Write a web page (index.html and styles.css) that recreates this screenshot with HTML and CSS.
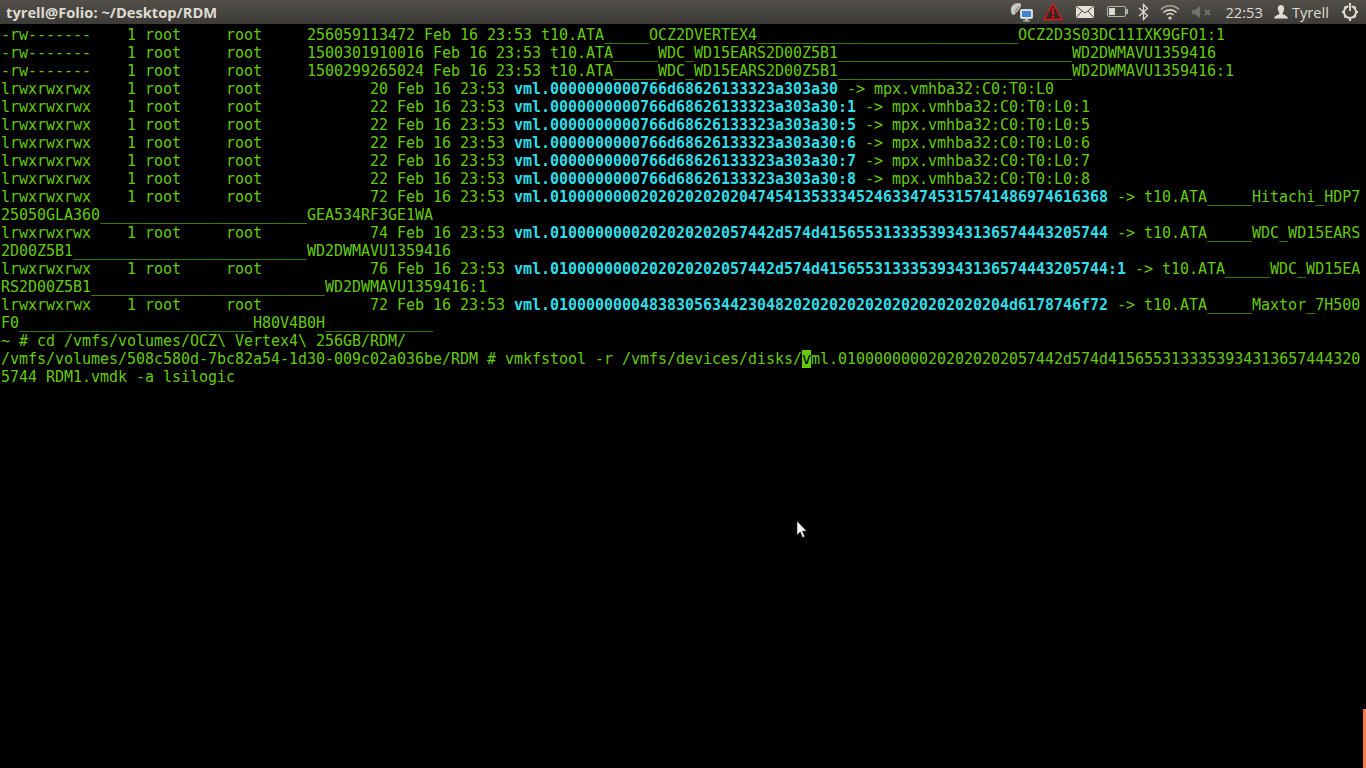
FILE: index.html
```html
<!DOCTYPE html>
<html lang="en">
<head>
<meta charset="utf-8">
<title>tyrell@Folio: ~/Desktop/RDM</title>
<link rel="stylesheet" href="styles.css">
</head>
<body>
<header class="panel">
  <div class="title">tyrell@Folio: ~/Desktop/RDM</div>
  <div class="indicators">
    <svg class="slot s34" viewBox="0 0 34 24"><path d="M7 11 C6 7 10 3 14 3 C17 3 18 5 16 8 C14 11 12 13 10 15 C8 15 7 13 7 11Z" fill="#c9c7c1"/><path d="M11 12 L15 6" stroke="#8a8984" stroke-width="1.2"/><rect x="16.5" y="9.5" width="12" height="9" rx="1" fill="#dfe3e6" stroke="#cfd2d2"/><rect x="18" y="11" width="9" height="6" fill="#3f86d0"/><rect x="21" y="19" width="3" height="1.5" fill="#b5b5b0"/><rect x="19" y="20.5" width="7" height="1" fill="#dddbd5"/></svg>
    <svg class="slot s31" viewBox="0 0 31 24"><path d="M15 4 L24 19.5 L6 19.5Z" fill="#2e2a28" stroke="#e01414" stroke-width="1.4" stroke-linejoin="miter"/><rect x="14" y="8.5" width="2" height="6.5" fill="#e01414"/><rect x="14" y="16" width="2" height="2" fill="#e01414"/></svg>
    <svg class="slot s32" viewBox="0 0 32 24"><rect x="7" y="6" width="18" height="12" rx="1" fill="#e6e2da"/><path d="M7.5 6.5 L16 13 L24.5 6.5 M7.5 17.5 L13 11 M24.5 17.5 L19 11" fill="none" stroke="#4a4944" stroke-width="1"/></svg>
    <svg class="slot s32" viewBox="0 0 32 24"><rect x="6.5" y="6.5" width="18" height="10" rx="1.5" fill="#45443f" stroke="#b5b2aa"/><rect x="8" y="8" width="6" height="7" fill="#dcd9d1"/><rect x="25" y="9" width="2" height="5" fill="#b5b2aa"/></svg>
    <svg class="slot s21" viewBox="0 0 21 24"><path d="M6 8 L14.5 15.5 L10.5 19.5 L10.5 4.5 L14.5 8.5 L6 16" fill="none" stroke="#dfdbd2" stroke-width="1.3"/></svg>
    <svg class="slot s32" viewBox="0 0 32 24"><path d="M7 9.5 C12 4.5 20 4.5 25 9.5" fill="none" stroke="#a9a69e" stroke-width="1.6"/><path d="M9.5 12.5 C13 9 19 9 22.5 12.5" fill="none" stroke="#dfdbd2" stroke-width="1.6"/><path d="M12.5 15 C14.5 13.2 17.5 13.2 19.5 15" fill="none" stroke="#dfdbd2" stroke-width="1.6"/><circle cx="16" cy="18" r="1.6" fill="#dfdbd2"/></svg>
    <svg class="slot s32" viewBox="0 0 32 24"><path d="M6 10 H9 L14 6 V18 L9 14 H6Z" fill="#72716b"/><path d="M19 10 L24 15 M24 10 L19 15" stroke="#72716b" stroke-width="1.8"/></svg>
    <span class="clock">22:53</span>
    <svg class="slot s18" viewBox="0 0 18 24"><path d="M9 5 C12 5 12.5 8 12 10 C11.6 11.8 10.6 12.6 10.6 13.6 C10.6 15 15.5 15.4 16 18.5 H2 C2.5 15.4 7.4 15 7.4 13.6 C7.4 12.6 6.4 11.8 6 10 C5.5 8 6 5 9 5Z" fill="#dfdbd2"/></svg>
    <span class="user">Tyrell</span>
    <svg class="slot s31" viewBox="0 0 31 24"><circle cx="15" cy="12" r="6" fill="none" stroke="#dfdbd2" stroke-width="2"/><path d="M15 3 V5 M15 19 V21 M7 12 H9 M21 12 H23 M9.5 6.5 L10.8 7.8 M20.5 6.5 L19.2 7.8 M20.5 17.5 L19.2 16.2 M9.5 17.5 L10.8 16.2" stroke="#dfdbd2" stroke-width="2.2"/><path d="M12.5 4.5 L15 9 L17.5 4.5Z" fill="#45443f"/><path d="M15 4 V11" stroke="#dfdbd2" stroke-width="1.8"/></svg>
  </div>
</header>
<main class="term">
<div class="row">-rw-------    1 root     root     256059113472 Feb 16 23:53 t10.ATA_____OCZ2DVERTEX4_____________________________OCZ2D3S03DC11IXK9GFO1:1</div>
<div class="row">-rw-------    1 root     root     1500301910016 Feb 16 23:53 t10.ATA_____WDC_WD15EARS2D00Z5B1__________________________WD2DWMAVU1359416</div>
<div class="row">-rw-------    1 root     root     1500299265024 Feb 16 23:53 t10.ATA_____WDC_WD15EARS2D00Z5B1__________________________WD2DWMAVU1359416:1</div>
<div class="row">lrwxrwxrwx    1 root     root            20 Feb 16 23:53 <b class="link">vml.0000000000766d68626133323a303a30</b> -> mpx.vmhba32:C0:T0:L0</div>
<div class="row">lrwxrwxrwx    1 root     root            22 Feb 16 23:53 <b class="link">vml.0000000000766d68626133323a303a30:1</b> -> mpx.vmhba32:C0:T0:L0:1</div>
<div class="row">lrwxrwxrwx    1 root     root            22 Feb 16 23:53 <b class="link">vml.0000000000766d68626133323a303a30:5</b> -> mpx.vmhba32:C0:T0:L0:5</div>
<div class="row">lrwxrwxrwx    1 root     root            22 Feb 16 23:53 <b class="link">vml.0000000000766d68626133323a303a30:6</b> -> mpx.vmhba32:C0:T0:L0:6</div>
<div class="row">lrwxrwxrwx    1 root     root            22 Feb 16 23:53 <b class="link">vml.0000000000766d68626133323a303a30:7</b> -> mpx.vmhba32:C0:T0:L0:7</div>
<div class="row">lrwxrwxrwx    1 root     root            22 Feb 16 23:53 <b class="link">vml.0000000000766d68626133323a303a30:8</b> -> mpx.vmhba32:C0:T0:L0:8</div>
<div class="row">lrwxrwxrwx    1 root     root            72 Feb 16 23:53 <b class="link">vml.01000000002020202020204745413533345246334745315741486974616368</b> -> t10.ATA_____Hitachi_HDP7</div>
<div class="row">25050GLA360_______________________GEA534RF3GE1WA</div>
<div class="row">lrwxrwxrwx    1 root     root            74 Feb 16 23:53 <b class="link">vml.0100000000202020202057442d574d41565531333539343136574443205744</b> -> t10.ATA_____WDC_WD15EARS</div>
<div class="row">2D00Z5B1__________________________WD2DWMAVU1359416</div>
<div class="row">lrwxrwxrwx    1 root     root            76 Feb 16 23:53 <b class="link">vml.0100000000202020202057442d574d41565531333539343136574443205744:1</b> -> t10.ATA_____WDC_WD15EA</div>
<div class="row">RS2D00Z5B1__________________________WD2DWMAVU1359416:1</div>
<div class="row">lrwxrwxrwx    1 root     root            72 Feb 16 23:53 <b class="link">vml.010000000048383056344230482020202020202020202020204d6178746f72</b> -> t10.ATA_____Maxtor_7H500</div>
<div class="row">F0__________________________H80V4B0H____________</div>
<div class="row">~ # cd /vmfs/volumes/OCZ\ Vertex4\ 256GB/RDM/</div>
<div class="row">/vmfs/volumes/508c580d-7bc82a54-1d30-009c02a036be/RDM # vmkfstool -r /vmfs/devices/disks/<span class="cursor">v</span>ml.0100000000202020202057442d574d4156553133353934313657444320</div>
<div class="row">5744 RDM1.vmdk -a lsilogic</div>
</main>
<svg class="pointer" viewBox="0 0 12 20"><path d="M1 1 L1 15 L4.2 12 L6.6 17.5 L8.8 16.5 L6.4 11.2 L10.5 11 Z" fill="#fff" stroke="#222" stroke-width="0.6"/></svg>
<div class="stripe"></div>
</body>
</html>
```
FILE: styles.css
```css
html, body {
  margin: 0;
  height: 100%;
  background: #000;
  overflow: hidden;
}
.panel {
  height: 24px;
  display: flex;
  align-items: center;
  justify-content: space-between;
  background: linear-gradient(#524f49, #3c3b37);
  color: #dfdbd2;
  font-family: "Open Sans", sans-serif;
  font-size: 14.7px;
}
.title {
  padding-left: 6px;
  font-weight: 700;
}
.indicators {
  display: flex;
  align-items: center;
}
.slot { height: 24px; display: block; }
.s34 { width: 34px; }
.s32 { width: 32px; }
.s31 { width: 31px; }
.s21 { width: 21px; }
.s18 { width: 18px; }
.clock { padding: 0 9px 0 7px; }
.user { padding: 0 6px 0 2px; }
.term {
  padding: 2px 0 0 1px;
  color: #65cb08;
  font-family: "DejaVu Sans Mono", monospace;
  font-size: 15px;
  letter-spacing: -0.03px;
  line-height: 18px;
}
.row { height: 18px; white-space: pre; }
.link { color: #2fdde8; font-weight: 700; }
.cursor { background: #65cb08; color: #000; }
.pointer {
  position: absolute;
  left: 796px;
  top: 520px;
  width: 12px;
  height: 20px;
}
.stripe {
  position: absolute;
  right: 0;
  top: 709px;
  bottom: 0;
  width: 3px;
  background: #f47c45;
}
```
